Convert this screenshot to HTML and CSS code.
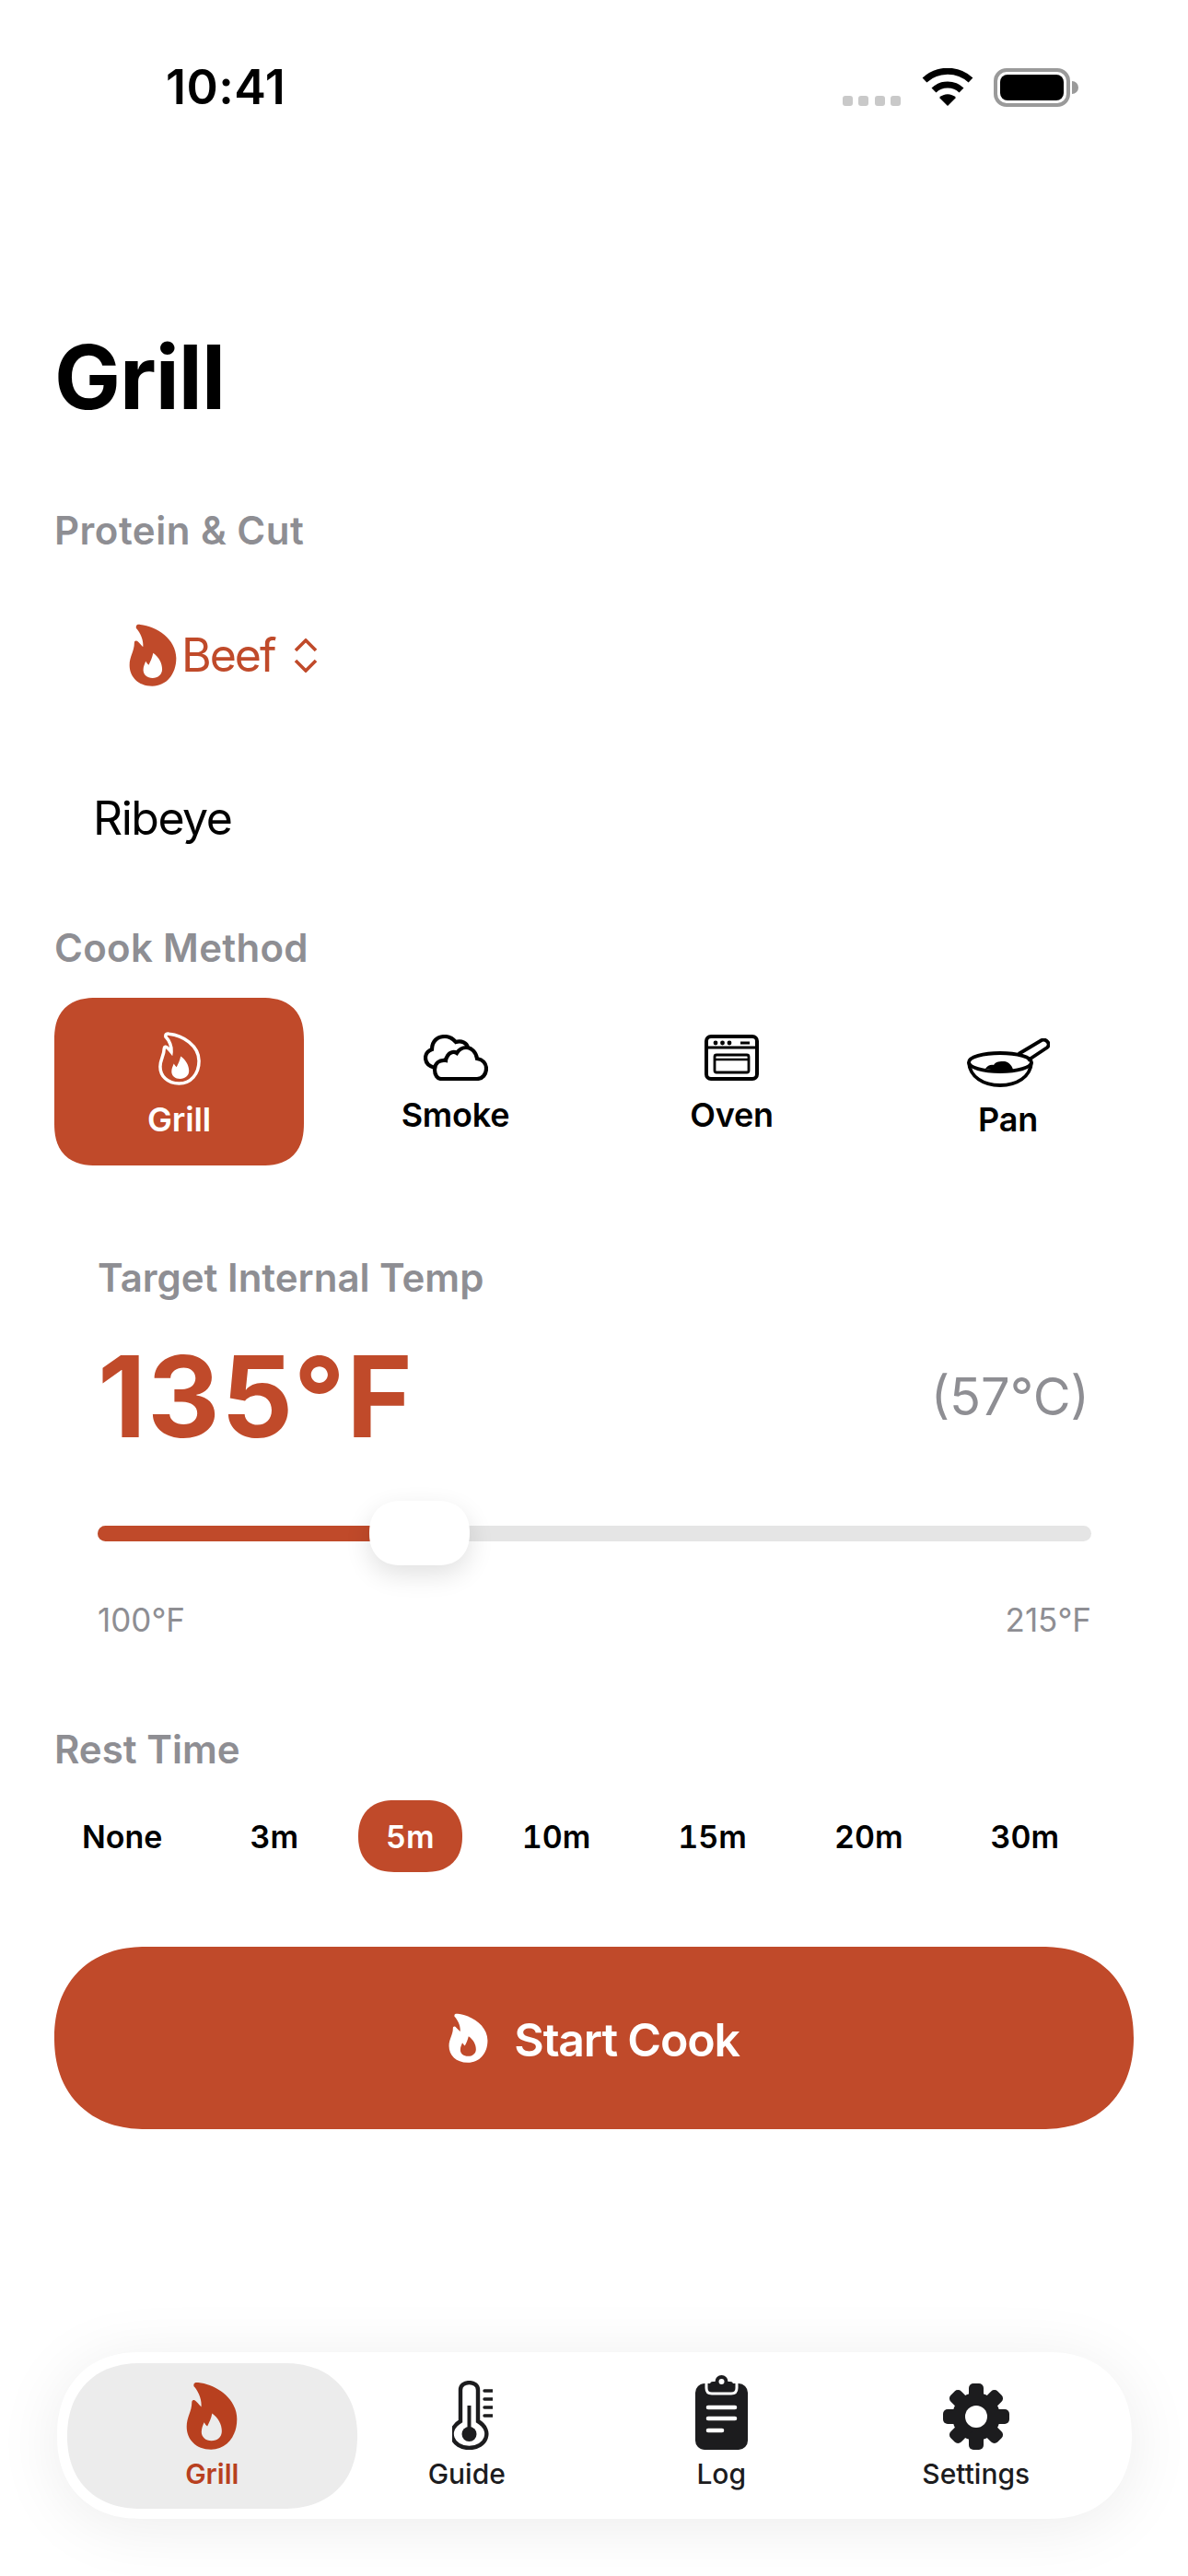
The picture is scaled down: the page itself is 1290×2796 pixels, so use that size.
FILE: index.html
```html
<!DOCTYPE html>
<html lang="en">
<head>
<meta charset="utf-8">
<title>Grill</title>
<link rel="stylesheet" href="styles.css">
</head>
<body>
<svg class="defs" width="0" height="0" aria-hidden="true">
  <symbol id="flame" viewBox="0 0 160 204" preserveAspectRatio="none">
    <path fill="currentColor" fill-rule="evenodd" d="M24 8C26 2 32 2 38 3C92 8 158 50 158 112C158 165 125 203 78 203C30 203 2 172 2 135C2 105 18 90 18 62C18 55 25 52 32 60C38 66 44 72 47 76C50 55 38 28 24 14ZM81 95C100 108 111 128 111 148C111 166 97 177 79 177C61 177 48 166 48 151C48 140 52 132 56 122C59 127 62 131 66 134C72 122 78 110 81 95Z"/>
  </symbol>
</svg>
<div class="screen">
  <header class="status">
    <span class="time">10:41</span>
    <div class="status-icons">
      <div class="signal"><i></i><i></i><i></i><i></i></div>
      <svg class="wifi" viewBox="0 0 56 41"><path d="M3 13C17 0 39 0 53 13M13 24C21 16 35 16 43 24" fill="none" stroke="#000" stroke-width="7"/><path d="M19 32C24 27 32 27 37 32L28 41Z" fill="#000"/></svg>
      <div class="battery"><div class="battery-level"></div></div>
      <div class="battery-cap"></div>
    </div>
  </header>

  <main class="content">
    <h1 class="title">Grill</h1>
    <div class="label label-protein">Protein &amp; Cut</div>
    <div class="protein">
      <svg class="protein-flame"><use href="#flame"/></svg>
      <span class="protein-name">Beef</span>
      <svg class="chevrons" viewBox="0 0 26 37"><path d="M2 13L13 2L24 13M2 24L13 35L24 24" fill="none" stroke="currentColor" stroke-width="3.6"/></svg>
    </div>
    <div class="cut">Ribeye</div>

    <div class="label label-method">Cook Method</div>
    <div class="methods">
      <div class="method method-active">
        <svg class="i-grill" viewBox="0 0 160 204" preserveAspectRatio="none"><path fill="none" stroke="currentColor" stroke-width="13" d="M24 8C26 2 32 2 38 3C92 8 158 50 158 112C158 165 125 203 78 203C30 203 2 172 2 135C2 105 18 90 18 62C18 55 25 52 32 60C38 66 44 72 47 76C50 55 38 28 24 14Z" transform="translate(8 8) scale(.9)"/><path fill="currentColor" d="M84 92C103 105 114 125 114 145C114 163 100 174 82 174C64 174 51 163 51 148C51 137 55 129 59 119C62 124 65 128 69 131C75 119 81 107 84 92Z"/></svg>
        <span>Grill</span>
      </div>
      <div class="method">
        <svg class="i-smoke" viewBox="0 0 70 50"><g fill="none" stroke="currentColor" stroke-width="4.2"><path d="M19 48H58C64 48 68 43 68 37C68 31 64 27 58 26C57 19 52 14 46 14C41 14 38 17 36 20C33 18 28 19 26 23C24 26 24 28 24 28C17 27 12 31 12 38C12 44 15 48 19 48Z"/><path d="M12 36C5 34 2 30 2 25C2 20 6 17 9 16C9 7 15 2 23 2C29 2 32 5 35 8C41 6 47 9 48 14"/></g></svg>
        <span>Smoke</span>
      </div>
      <div class="method">
        <svg class="i-oven" viewBox="0 0 59 50"><g fill="none" stroke="currentColor"><rect x="2" y="2" width="55" height="46" rx="5" stroke-width="4"/><path d="M2 14H57" stroke-width="3"/><rect x="11" y="22" width="37" height="19" rx="2" stroke-width="2.8"/><path d="M11 27H48" stroke-width="2.400"/><path d="M39 9H49" stroke-width="3"/></g><g fill="currentColor"><circle cx="12" cy="9" r="2.400"/><circle cx="19.500" cy="9" r="2.400"/><circle cx="27" cy="9" r="2.400"/></g></svg>
        <span>Oven</span>
      </div>
      <div class="method method-pan">
        <svg class="i-pan" viewBox="0 0 90 53"><g fill="none" stroke="currentColor" stroke-width="3.800"><ellipse cx="36" cy="26" rx="34" ry="10"/><path d="M2 26C3 42 18 51 36 51C54 51 69 42 70 26"/><path d="M56 17L81 2C87 0 91 7 87 10L66 24"/></g><path fill="currentColor" d="M20 33C22 29 27 28 29 29C31 25 36 25 41 25C46 26 49 30 50 34C40 36 30 35 20 33Z"/></svg>
        <span>Pan</span>
      </div>
    </div>

    <section class="temp">
      <div class="label">Target Internal Temp</div>
      <div class="temp-values">
        <span class="temp-f">135°F</span>
        <span class="temp-c">(57°C)</span>
      </div>
      <div class="slider">
        <div class="track"><div class="fill"></div></div>
        <div class="thumb"></div>
      </div>
      <div class="range"><span>100°F</span><span>215°F</span></div>
    </section>

    <div class="label label-rest">Rest Time</div>
    <div class="rests">
      <span class="rest">None</span>
      <span class="rest">3m</span>
      <span class="rest rest-active">5m</span>
      <span class="rest">10m</span>
      <span class="rest">15m</span>
      <span class="rest">20m</span>
      <span class="rest">30m</span>
    </div>

    <button class="start" type="button">
      <svg class="start-flame"><use href="#flame"/></svg>
      <span class="start-text">Start Cook</span>
    </button>
  </main>

  <nav class="tabbar">
    <div class="tab tab-active">
      <svg class="i-tabflame"><use href="#flame"/></svg>
      <span>Grill</span>
    </div>
    <div class="tab">
      <svg class="i-guide" viewBox="0 0 44 75"><g fill="none" stroke="currentColor"><path d="M9 44V10C9 -0.500 28 -0.500 28 10V44C45 54 37 73 18.500 73C0 73 -8 54 9 44Z" stroke-width="4.400"/><path d="M18.500 27V58" stroke-width="4"/><path d="M35 11H44M35 20H44M35 29H44M35 38H44" stroke-width="3.400" stroke-linecap="round"/></g><ellipse cx="18.500" cy="58" rx="8" ry="8" fill="currentColor"/></svg>
      <span>Guide</span>
    </div>
    <div class="tab">
      <svg class="i-log" viewBox="0 0 57 81"><rect y="9" width="57" height="72" rx="10" fill="currentColor"/><path d="M12 9V14C12 18 14 20 18 20H39C43 20 45 18 45 14V9" fill="none" stroke="#fff" stroke-width="3"/><rect x="16" y="7" width="25" height="9" rx="3" fill="currentColor"/><circle cx="28.500" cy="7" r="7" fill="currentColor"/><circle cx="28.500" cy="7" r="3" fill="#fff"/><path d="M14 35H43M14 47H43M14 60H29" stroke="#fff" stroke-width="4.600" stroke-linecap="round"/></svg>
      <span>Log</span>
    </div>
    <div class="tab">
      <svg class="i-settings" viewBox="0 0 72 72"><g fill="currentColor"><circle cx="36" cy="36" r="26"/><rect x="28" y="0" width="16" height="72" rx="5"/><rect x="28" y="0" width="16" height="72" rx="5" transform="rotate(45 36 36)"/><rect x="28" y="0" width="16" height="72" rx="5" transform="rotate(90 36 36)"/><rect x="28" y="0" width="16" height="72" rx="5" transform="rotate(135 36 36)"/></g><circle cx="36" cy="36" r="12" fill="#fff"/></svg>
      <span>Settings</span>
    </div>
  </nav>
</div>
</body>
</html>
```
FILE: styles.css
```css
* { box-sizing: border-box; }
html, body { margin: 0; padding: 0; background: #fff; }
body { font-family: "Inter", "Liberation Sans", sans-serif; color: #000; }
.defs { position: absolute; }
.screen { position: relative; width: 1290px; height: 2796px; overflow: hidden; background: #fff; }

.status { display: flex; justify-content: space-between; align-items: center; height: 70px; margin-top: 60px; padding: 0 119px 0 180px; }
.time { font-size: 52px; line-height: 70px; font-weight: 600; letter-spacing: .5px; }
.status-icons { display: flex; align-items: flex-start; height: 42px; }
.signal { display: flex; gap: 6.500px; margin-top: 30px; margin-right: 23px; }
.signal i { display: block; width: 11px; height: 11px; border-radius: 3px; background: #c9c9c9; }
.wifi { width: 56px; height: 41px; margin-right: 22px; }
.battery { width: 83px; height: 42px; padding: 3px; border: 4px solid #9a9a9a; border-radius: 14px; }
.battery-level { width: 100%; height: 100%; background: #000; border-radius: 8px; }
.battery-cap { width: 7px; height: 14px; margin: 14px 0 0 2px; background: #9a9a9a; border-radius: 0 7px 7px 0; }

.content { padding: 0 59px; }
.title { margin: 224px 0 0; font-size: 96px; line-height: 110px; font-weight: 700; letter-spacing: -1px; }
.label { font-size: 42px; line-height: 60px; font-weight: 600; color: #8e8e93; }
.label-protein { margin-top: 82px; letter-spacing: .5px; }
.protein { display: flex; align-items: center; height: 130px; margin-top: 40px; padding-left: 81px; color: #c04a2a; }
.protein-flame { width: 52px; height: 68px; margin-right: 5px; }
.protein-name { font-size: 50px; line-height: 60px; letter-spacing: -2px; }
.chevrons { width: 26px; height: 37px; margin-left: 20px; }
.cut { margin-top: 82px; padding-left: 42px; font-size: 50px; line-height: 60px; letter-spacing: -1.5px; }
.label-method { margin-top: 81px; letter-spacing: .3px; }

.methods { display: grid; grid-template-columns: repeat(4, 271px); gap: 29px; margin-top: 24px; }
.method { display: flex; flex-direction: column; align-items: center; justify-content: center; gap: 22px; height: 182px; border-radius: 46px; corner-shape: superellipse(1.3); font-size: 36px; line-height: 30px; font-weight: 600; letter-spacing: -.2px; }
.method-active { background: #c04a2a; color: #fff; gap: 20px; }
.i-grill { width: 48px; height: 61px; }
.i-smoke { width: 70px; height: 50px; }
.i-oven { width: 59px; height: 50px; }
.i-pan { width: 90px; height: 53px; }
.method-pan { gap: 20px; padding-top: 8px; }

.temp { margin-top: 92px; padding: 0 46px 0 47px; }
.temp-values { display: flex; justify-content: space-between; align-items: center; height: 120px; margin-top: 37px; }
.temp-f { font-size: 122px; line-height: 120px; font-weight: 700; color: #c04a2a; padding-top: 3px; letter-spacing: 1.4px; }
.temp-c { font-size: 56px; line-height: 70px; color: #8e8e93; padding-top: 3px; margin-right: 2px; }
.slider { position: relative; display: flex; align-items: center; height: 70px; margin-top: 55px; }
.track { width: 100%; height: 17px; border-radius: 9px; background: #e5e5e5; overflow: hidden; }
.fill { width: 32%; height: 100%; background: #c04a2a; }
.thumb { position: absolute; left: 295px; top: 0; width: 109px; height: 70px; border-radius: 35px; corner-shape: superellipse(1.2); background: #fff; box-shadow: 0 10px 28px rgba(0, 0, 0, .12); }
.range { display: flex; justify-content: space-between; margin-top: 39px; font-size: 35px; line-height: 40px; color: #8e8e93; }

.label-rest { margin-top: 91px; }
.rests { display: flex; gap: 35px; margin-top: 25px; }
.rest { display: flex; align-items: center; height: 78px; padding: 0 30px; border-radius: 39px; font-size: 34px; font-weight: 600; font-variant-numeric: tabular-nums; }
.rest-active { background: #c04a2a; color: #fff; corner-shape: superellipse(1.2); }

.start { display: flex; align-items: center; justify-content: center; gap: 28px; width: 100%; height: 198px; margin-top: 81px; padding: 0; border: 0; border-radius: 99px; corner-shape: superellipse(1.15); background: #c04a2a; color: #fff; font-family: inherit; font-size: 50px; font-weight: 600; }
.start-text { letter-spacing: -1.2px; padding-top: 4px; }
.start-flame { width: 43px; height: 54px; }

.tabbar { position: absolute; left: 62px; top: 2553px; width: 1167px; height: 181px; display: grid; grid-template-columns: repeat(4, 276.500px); align-items: center; padding: 0 30px; border-radius: 90px; corner-shape: superellipse(1.15); background: #fff; box-shadow: 0 8px 70px rgba(0, 0, 0, .08); }
.tab { display: flex; flex-direction: column; align-items: center; justify-content: flex-end; height: 158px; padding-bottom: 20px; gap: 8px; color: #1c1c1e; font-size: 30px; line-height: 36px; font-weight: 500; }
.tab-active { margin: 0 -19px; border-radius: 79px; corner-shape: superellipse(1.15); background: #ececec; color: #b8401f; font-weight: 600; }
.i-tabflame { width: 56px; height: 74px; }
.i-guide { width: 44px; height: 75px; margin-left: 12px; }
.i-log { width: 57px; height: 81px; }
.i-settings { width: 72px; height: 72px; }
```
